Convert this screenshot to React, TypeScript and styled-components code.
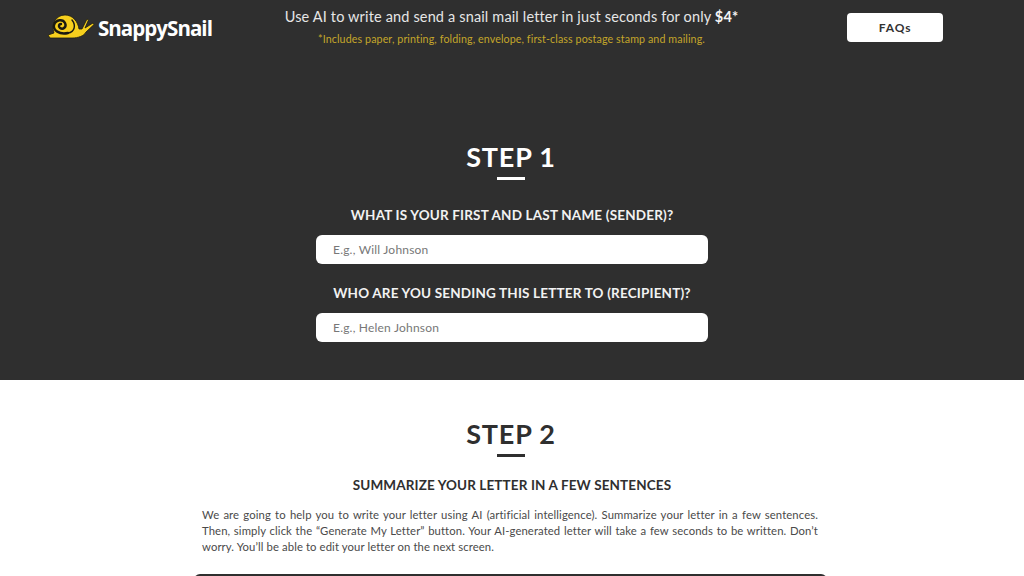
import React from 'react';
import styled, { createGlobalStyle } from 'styled-components';

const Global = createGlobalStyle`
  html, body { margin: 0; padding: 0; height: 576px; overflow: hidden; background: #fff; }
  body { font-family: Lato, "Open Sans", sans-serif; }
  * { box-sizing: border-box; }
`;

const Dark = styled.section`
  background: #2f2f2f;
  height: 380px;
  display: flex;
  flex-direction: column;
  align-items: center;
`;

const Header = styled.header`
  width: 100%;
  height: 56px;
  padding: 0 81px 0 48px;
  display: grid;
  grid-template-columns: 165px 1fr 96px;
  align-items: start;
`;

const Logo = styled.div`
  display: flex;
  align-items: center;
  height: 56px;
  padding-bottom: 3px;
`;

const SnailMark = styled.svg`
  flex: none;
  width: 47px;
  height: 25px;
`;

const LogoText = styled.span`
  font-family: "Open Sans", sans-serif;
  font-weight: 700;
  font-size: 20.5px;
  letter-spacing: -0.95px;
  color: #fff;
  margin-left: 3px;
  margin-top: 3px;
`;

const Promo = styled.div`
  text-align: center;
  padding: 7px 0 0 0;
  margin-right: 37px;
`;

const PromoLine = styled.div`
  font-size: 14.5px;
  line-height: 20px;
  color: #e6e6e6;
  font-weight: 400;
  letter-spacing: 0.15px;
  b { font-weight: 700; color: #f4f4f4; }
`;

const FinePrint = styled.div`
  font-size: 10.7px;
  line-height: 14px;
  margin-top: 5px;
  color: #c4a62a;
  letter-spacing: 0.1px;
`;

const FaqButton = styled.button`
  margin-top: 13px;
  width: 96px;
  height: 29px;
  border: 0;
  border-radius: 4px;
  background: #fff;
  color: #333;
  font-family: inherit;
  font-size: 12px;
  font-weight: 700;
  letter-spacing: 0.9px;
  padding: 0;
`;

const StepTitle = styled.h2<{ $light?: boolean; $top: number }>`
  flex: none;
  margin: ${p => p.$top}px 2px 0 0;
  font-size: 27px;
  line-height: 34px;
  font-weight: 700;
  letter-spacing: 0.8px;
  color: ${p => (p.$light ? '#fff' : '#2f2f2f')};
  text-align: center;
`;

const Rule = styled.div<{ $light?: boolean }>`
  flex: none;
  width: 28px;
  height: 3px;
  margin: 3px 2px 0 0;
  background: ${p => (p.$light ? '#fff' : '#2f2f2f')};
`;

const FieldLabel = styled.label<{ $top: number }>`
  display: block;
  margin-top: ${p => p.$top}px;
  font-size: 13.5px;
  line-height: 18px;
  font-weight: 700;
  letter-spacing: 0.18px;
  color: #f2f2f2;
  text-align: center;
`;

const Input = styled.input`
  display: block;
  width: 392px;
  height: 29px;
  margin-top: 11px;
  border: 0;
  border-radius: 6px;
  padding: 0 17px;
  background: #fff;
  font-family: inherit;
  font-size: 12px;
  letter-spacing: 0.2px;
  outline: none;
  &::placeholder { color: #777; opacity: 1; }
`;

const Light = styled.section`
  height: 196px;
  background: #fff;
  display: flex;
  flex-direction: column;
  align-items: center;
  overflow: hidden;
`;

const Subtitle = styled.h3`
  flex: none;
  margin: 19px 0 0;
  font-size: 13.5px;
  line-height: 18px;
  font-weight: 700;
  letter-spacing: 0.12px;
  color: #2f2f2f;
  text-align: center;
`;

const Copy = styled.p`
  flex: none;
  margin: 13px 4px 0 0;
  width: 616px;
  font-size: 11.3px;
  line-height: 16px;
  font-weight: 400;
  letter-spacing: 0.1px;
  color: #4a4a4a;
  text-align: justify;
`;

const Composer = styled.div`
  flex: none;
  width: 633px;
  height: 40px;
  margin: 19px 3px 0 0;
  border-radius: 6px;
  background: #2f2f2f;
`;

const Snail = () => (
  <SnailMark viewBox="0 0 47 25" aria-hidden="true">
    <path d="M0 21 L6 19 C3 10 8 1 17 1 C25 1 30 8 31 15 L34 15 L39 5 L40.5 6 L37 14 L45 9 L46 10.5 L38 18 C36 22 30 24 24 24 L2 24 Z" fill="#f6cf1d" stroke="#1a1a12" strokeWidth="0.8" strokeLinejoin="round" />
    <path d="M20 19 C11 21 5 16 6 11 C8 5 15 5 17 9 C19 13 15 16 12 14 C10 12 11 10 13 10" fill="none" stroke="#1a1a12" strokeWidth="2.4" strokeLinecap="round" />
    <path d="M20 19 C27 18 28 11 24 6" fill="none" stroke="#1a1a12" strokeWidth="1.4" strokeLinecap="round" />
  </SnailMark>
);

export default function App() {
  return (
    <>
      <Global />
      <Dark>
        <Header>
          <Logo>
            <Snail />
            <LogoText>SnappySnail</LogoText>
          </Logo>
          <Promo>
            <PromoLine>Use AI to write and send a snail mail letter in just seconds for only <b>$4*</b></PromoLine>
            <FinePrint>*Includes paper, printing, folding, envelope, first-class postage stamp and mailing.</FinePrint>
          </Promo>
          <FaqButton>FAQs</FaqButton>
        </Header>
        <StepTitle $light $top={84}>STEP 1</StepTitle>
        <Rule $light />
        <FieldLabel $top={26}>WHAT IS YOUR FIRST AND LAST NAME (SENDER)?</FieldLabel>
        <Input placeholder="E.g., Will Johnson" />
        <FieldLabel $top={20}>WHO ARE YOU SENDING THIS LETTER TO (RECIPIENT)?</FieldLabel>
        <Input placeholder="E.g., Helen Johnson" />
      </Dark>
      <Light>
        <StepTitle $top={37}>STEP 2</StepTitle>
        <Rule />
        <Subtitle>SUMMARIZE YOUR LETTER IN A FEW SENTENCES</Subtitle>
        <Copy>
          We are going to help you to write your letter using AI (artificial intelligence). Summarize your letter in a few sentences.
          Then, simply click the “Generate My Letter” button. Your AI-generated letter will take a few seconds to be written. Don’t
          worry. You’ll be able to edit your letter on the next screen.
        </Copy>
        <Composer />
      </Light>
    </>
  );
}
